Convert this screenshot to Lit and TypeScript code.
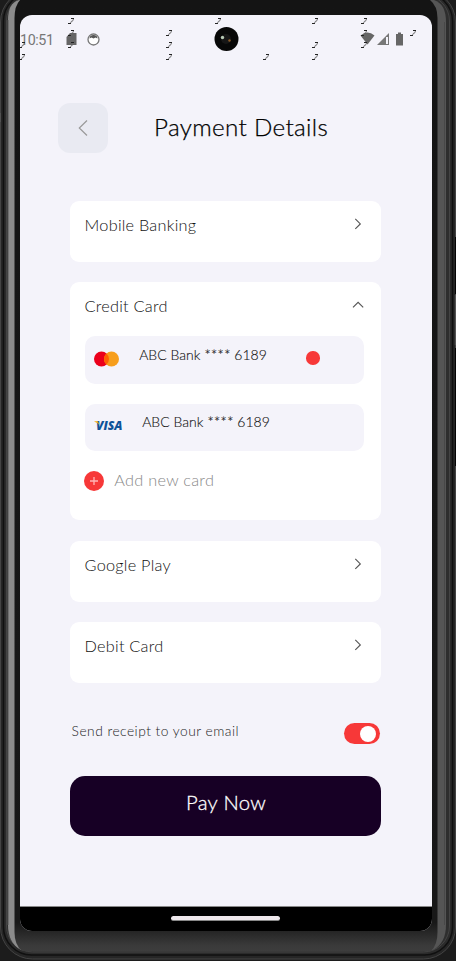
import { LitElement, html, css, svg } from "lit";
import { customElement } from "lit/decorators.js";

const chevron = (d: string) => html`<svg class="chev" viewBox="0 0 14 14"><path d=${d} fill="none" stroke="#555" stroke-width="1.150"/></svg>`;
const RIGHT = "M4.300 1.900 9.300 6.900 4.300 11.900";
const UP = "M2 9.300 7.100 4.300 12.200 9.300";

// Small slanted note marks scattered behind the status bar: [x, y]
const MARKS = [[68,18],[215,18],[312,18],[361,18],[68,30],[166,30],[361,30],[410,30],[19,42],[68,42],[166,42],[312,42],[361,42],[19,54],[166,54],[263,54],[312,54]];

@customElement("app-root")
export class AppRoot extends LitElement {
  static styles = css`
    :host { display: block; width: 456px; height: 961px; font-family: Lato, "Open Sans", sans-serif; font-weight: 300; }
    * { box-sizing: border-box; }
    .phone { position: relative; width: 456px; height: 961px; overflow: hidden; background: #1b1b1b; padding: 15px 24px 30px 20px; }
    .frame { position: absolute; inset: 0; width: 456px; height: 961px; }
    .screen { position: relative; width: 412px; height: 916px; background: #f4f3fa; border-radius: 12px; overflow: hidden; display: flex; flex-direction: column; }
    .status { height: 50px; flex: none; }
    .over { position: absolute; left: 0; top: 0; width: 412px; height: 50px; }
    .time { font: 400 14.3px Roboto, sans-serif; fill: #777; }
    header { display: flex; align-items: center; height: 50px; margin: 38px 0 48px 37.600px; }
    .back { width: 50px; height: 50px; border-radius: 12px; background: #e9eaf2; }
    h1 { margin: -2px 0 0 46.500px; font-size: 24.200px; font-weight: 300; letter-spacing: .33px; line-height: 30px; color: #000; white-space: nowrap; -webkit-text-stroke: .25px #000; }
    main { display: flex; flex-direction: column; gap: 20px; padding: 0 51px 0 49.600px; }
    .panel { background: #fff; border-radius: 9px; height: 61px; padding: 14px 14px 0 15px; }
    .panel.open { height: 238px; margin: 0 0 1px; }
    .row { display: flex; justify-content: space-between; height: 20px; font-size: 16.300px; letter-spacing: .24px; line-height: 20px; color: #111; }
    .chev { width: 14px; height: 14px; margin: 2px 2px 0 0; }
    .card { width: 279px; height: 48px; margin-top: 20px; border-radius: 10px; background: #f4f3fa; display: flex; padding-left: 9.600px; font-size: 14px; line-height: 18px; color: #111; -webkit-text-stroke: .12px #111; }
    .card + .card { height: 47px; }
    .card .name { width: 128px; padding-top: 10px; white-space: nowrap; }
    .card + .card .name { padding-top: 9px; }
    .stars { font-size: 15.500px; line-height: 1px; vertical-align: -1px; }
    .card svg { flex: none; -webkit-text-stroke: 0; }
    .dot { width: 13.500px; height: 13.500px; border-radius: 50%; background: #f73838; margin: 15px 0 0 39px; }
    .add { display: flex; align-items: center; gap: 10px; margin: 20px 0 0 -.4px; height: 20px; font-size: 16.300px; letter-spacing: .28px; line-height: 20px; color: #888; }
    .add span { margin-top: -2px; }
    .receipt { display: flex; justify-content: space-between; margin: 40px 52.200px 0 51.600px; font-size: 13.800px; letter-spacing: .48px; height: 21px; color: #222; }
    .receipt span { line-height: 16px; }
    .toggle { width: 36px; height: 21px; border-radius: 11px; background: #f73838; padding: 3px 3px 0 16px; }
    .knob { width: 16px; height: 16px; border-radius: 50%; background: #fff; }
    .pay { width: 311.400px; height: 60px; margin: 32px 0 0 49.800px; border: 0; border-radius: 15px; background: #170025; color: #fff; font: 300 20.300px/24px Lato, sans-serif; letter-spacing: .3px; padding: 0 0 8px 1px; text-align: center; -webkit-text-stroke: .3px #fff; }
    .nav { margin-top: auto; height: 25px; flex: none; background: #000; border-top: 1px solid #888; display: flex; justify-content: center; padding-top: 9px; }
    .pill { width: 109px; height: 5px; margin-right: 1px; border-radius: 2.500px; background: #eee8ec; border-bottom: 1px solid #888; }
  `;

  render() {
    return html`<div class="phone">
      <svg class="frame" viewBox="0 0 456 961">
        <defs>
          <linearGradient id="bt" x2="0" y2="1"><stop stop-color="#141414"/><stop offset=".97" stop-color="#181818"/><stop offset=".994" stop-color="#3a3a3a"/><stop offset="1" stop-color="#3d3d3d"/></linearGradient>
        </defs>
        <rect width="456" height="961" fill="#1c1c1c"/>
        <rect x=".5" y="-10" width="455" height="969" rx="32" fill="#262626" stroke="#444" stroke-width="1"/>
        <rect x="3.500" y="-7" width="449" height="962" rx="28" fill="#2b2b2b" stroke="#101010" stroke-width="1.500"/>
        <rect x="6.500" y="-5" width="443" height="957" rx="26" fill="#2e2e2e" stroke="#444" stroke-width="1"/>
        <path d="M8 20Q8 3 19 0H30V950H21Q8 943 8 925Z" fill="#8b8b8b"/>
        <path d="M8 20V925" stroke="#555" stroke-width="1"/>
        <path d="M446 22Q446 4 434 0H426V950H433Q446 943 446 925Z" fill="#555"/>
        <path d="M444.500 22V925" stroke="#484848" stroke-width="1"/>
        <path d="M14.500 18Q14.500 6 20 0H430Q437.500 6 437.500 18V932Q437.500 945 431 951H22Q14.500 945 14.500 932Z" fill="url(#bt)"/>
        <path d="M0 113v9M455.500 295v50" stroke="#555" stroke-width="1.500"/>
        <path d="M455.500 237v57M455.500 348v118" stroke="#050505" stroke-width="1"/>
      </svg>
      <div class="screen">
        <div class="status"></div>
        <svg class="over" viewBox="20 15 412 50">
          <text class="time" x="20" y="45" textLength="34">10:51</text>
          <path d="M70 33h6.500v12h-10v-8z" fill="#666"/>
          <circle cx="93.500" cy="39.500" r="5.500" fill="#fff" stroke="#777" stroke-width="1.300"/><path d="M89.500 38.500q0-3.500 4-3.500t4 3.500l-2-1-2 1-2-1z" fill="#555"/>
          <path d="M360.500 35.500q7-6 14 0l-7 9z" fill="#666"/>
          <path d="M389 33v12h-12z" fill="#777"/><path d="M386 37h2v7h-2z" fill="#f4f3fa"/>
          <path d="M396 34h2v-1.500h3V34h2v11.500h-7z" fill="#666"/>
          ${MARKS.map(([x, y]) => svg`<path d="M${x + 3} ${y + .5}h3M${x} ${y + 5.500}h3" stroke="#222"/><path d="M${x + 5.500} ${y + 1}l-1 2.200h-1l-1 2" stroke="#666" stroke-width=".9" fill="none"/>`)}
          <circle cx="226.500" cy="39" r="12" fill="#080808"/><circle cx="226" cy="39" r="5" fill="#161616"/>
          <circle cx="222.500" cy="37.500" r="1.700" fill="#b7c8b4"/><circle cx="229.500" cy="40.500" r="1.200" fill="#8a5a28"/>
        </svg>
        <header>
          <svg class="back" viewBox="0 0 50 50"><path d="M29 17.500 21.300 25 29 32.500" fill="none" stroke="#999" stroke-width="1.200"/></svg>
          <h1>Payment Details</h1>
        </header>
        <main>
          <section class="panel"><div class="row"><span>Mobile Banking</span>${chevron(RIGHT)}</div></section>
          <section class="panel open">
            <div class="row"><span>Credit Card</span>${chevron(UP)}</div>
            <div class="card">
              <svg width="45" height="48" viewBox="0 0 45 48"><circle cx="7.500" cy="23" r="7.500" fill="#eb001b"/><circle cx="17.500" cy="23" r="7.500" fill="#f79e1b"/><path d="M12.500 17.400a7.500 7.500 0 0 1 0 11.200a7.500 7.500 0 0 1 0-11.200z" fill="#ff5f00"/></svg>
              <span class="name">ABC Bank <span class="stars">****</span> 6189</span><span class="dot"></span>
            </div>
            <div class="card">
              <svg width="48" height="47" viewBox="0 0 48 47"><text x="2" y="26" font-family="Open Sans" font-size="12" font-weight="800" font-style="italic" fill="#0e5299" textLength="26.500" lengthAdjust="spacingAndGlyphs">VISA</text><path d="M.5 17.200h3.500l1.200 3.500q-1.500-2-4.700-3z" fill="#f2ae14"/></svg>
              <span class="name">ABC Bank <span class="stars">****</span> 6189</span>
            </div>
            <div class="add"><svg width="20" height="20" viewBox="0 0 20 20"><circle cx="10" cy="10" r="10" fill="#f73838"/><path d="M10 6v8M6 10h8" stroke="#ffb5b5" stroke-width="1.300"/></svg><span>Add new card</span></div>
          </section>
          <section class="panel"><div class="row"><span>Google Play</span>${chevron(RIGHT)}</div></section>
          <section class="panel"><div class="row"><span>Debit Card</span>${chevron(RIGHT)}</div></section>
        </main>
        <div class="receipt"><span>Send receipt to your email</span><div class="toggle"><div class="knob"></div></div></div>
        <button class="pay">Pay Now</button>
        <div class="nav"><div class="pill"></div></div>
      </div>
    </div>`;
  }
}
